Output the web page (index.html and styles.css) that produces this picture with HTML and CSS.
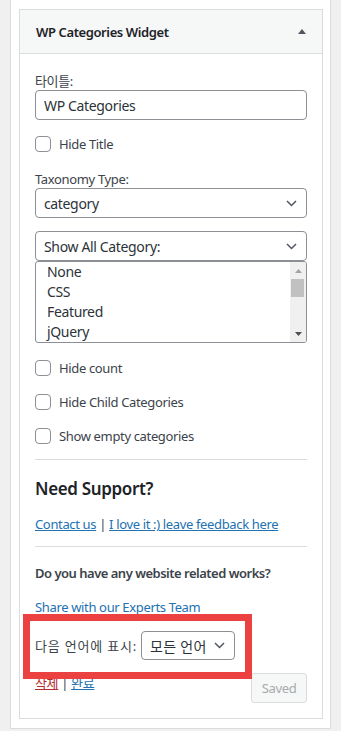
FILE: index.html
```html
<!DOCTYPE html>
<html>
<head>
  <meta charset="utf-8">
  <title>WP Categories Widget</title>
  <link rel="stylesheet" href="styles.css">
</head>
<body>
  <div class="sidebar">
    <div class="widget">
      <div class="widget-top">
        <h3 class="widget-title">WP Categories Widget</h3>
        <svg class="toggle" width="8" height="5" viewBox="0 0 8 5"><polygon points="0,5 4,0 8,5" fill="#50575e"/></svg>
      </div>
      <div class="widget-inside">
        <label class="field-label">타이틀:</label>
        <input class="text-input" type="text" value="WP Categories">

        <div class="check-row first-check">
          <span class="checkbox"></span>
          <span>Hide Title</span>
        </div>

        <label class="field-label taxonomy-label">Taxonomy Type:</label>
        <div class="select">
          <span>category</span>
          <svg class="chevron" width="11" height="7" viewBox="0 0 11 7"><polyline points="1,1 5.5,5.5 10,1" fill="none" stroke="#50575e" stroke-width="1.5"/></svg>
        </div>

        <div class="select show-all">
          <span>Show All Category:</span>
          <svg class="chevron" width="11" height="7" viewBox="0 0 11 7"><polyline points="1,1 5.5,5.5 10,1" fill="none" stroke="#50575e" stroke-width="1.5"/></svg>
        </div>
        <div class="listbox">
          <div class="options">
            <div class="option">None</div>
            <div class="option">CSS</div>
            <div class="option">Featured</div>
            <div class="option">jQuery</div>
          </div>
          <div class="scrollbar">
            <div class="scroll-btn">
              <svg width="7" height="4" viewBox="0 0 7 4"><polygon points="0,4 3.5,0 7,4" fill="#a3a3a3"/></svg>
            </div>
            <div class="scroll-thumb"></div>
            <div class="scroll-space"></div>
            <div class="scroll-btn">
              <svg width="7" height="4" viewBox="0 0 7 4"><polygon points="0,0 3.5,4 7,0" fill="#505050"/></svg>
            </div>
          </div>
        </div>

        <div class="check-row after-list">
          <span class="checkbox"></span>
          <span>Hide count</span>
        </div>
        <div class="check-row">
          <span class="checkbox"></span>
          <span>Hide Child Categories</span>
        </div>
        <div class="check-row">
          <span class="checkbox"></span>
          <span>Show empty categories</span>
        </div>

        <hr class="divider">

        <h3 class="support-title">Need Support?</h3>
        <p class="support-links">
          <a href="#">Contact us</a> | <a href="#">I love it :) leave feedback here</a>
        </p>

        <hr class="divider">

        <p class="works-title">Do you have any website related works?</p>
        <p class="works-link"><a href="#">Share with our Experts Team</a></p>

        <div class="lang-row">
          <span class="lang-label">다음 언어에 표시:</span>
          <div class="select lang-select">
            <span>모든 언어</span>
            <svg class="chevron" width="11" height="7" viewBox="0 0 11 7"><polyline points="1,1 5.5,5.5 10,1" fill="none" stroke="#50575e" stroke-width="1.5"/></svg>
          </div>
          <div class="highlight"></div>
        </div>

        <div class="widget-actions">
          <div class="action-links">
            <a href="#" class="delete-link">삭제</a> | <a href="#">완료</a>
          </div>
          <button class="saved-btn" disabled>Saved</button>
        </div>
      </div>
    </div>
  </div>
</body>
</html>
```

FILE: styles.css
```css
body {
  margin: 0;
  background: #f0f0f1;
  font-family: "Noto Sans", "Noto Sans CJK KR", sans-serif;
  font-size: 13px;
  letter-spacing: -0.35px;
  color: #3c434a;
}

.sidebar {
  margin-left: 10px;
  width: 321px;
  box-sizing: border-box;
  background: #fff;
  border: 1px solid #dcdcde;
  border-top: none;
  padding: 9px 7px 9px 8px;
}

.widget {
  border: 1px solid #dcdcde;
  background: #fff;
}

.widget-top {
  height: 43px;
  display: flex;
  align-items: center;
  justify-content: space-between;
  padding: 0 16px;
  background: #f6f7f7;
  border-bottom: 1px solid #dcdcde;
}

.widget-title {
  margin: 0;
  font-size: 13px;
  font-weight: 600;
  letter-spacing: -0.4px;
  color: #1d2327;
}

.widget-inside {
  padding: 18px 15px 15px;
}

.field-label {
  display: block;
  line-height: 18px;
}

.text-input {
  display: block;
  width: 100%;
  height: 30px;
  box-sizing: border-box;
  margin: 0;
  padding: 0 8px;
  border: 1px solid #8c8f94;
  border-radius: 4px;
  font-family: inherit;
  font-size: 14px;
  letter-spacing: -0.35px;
  color: #2c3338;
}

.check-row {
  display: flex;
  align-items: center;
  gap: 8px;
  height: 20px;
  margin-top: 14px;
}

.first-check {
  margin-top: 14px;
}

.after-list {
  margin-top: 15px;
}

.checkbox {
  width: 16px;
  height: 16px;
  box-sizing: border-box;
  border: 1px solid #8c8f94;
  border-radius: 4px;
  background: #fff;
}

.taxonomy-label {
  margin-top: 16px;
}

.select {
  display: flex;
  align-items: center;
  justify-content: space-between;
  height: 30px;
  box-sizing: border-box;
  padding: 0 9px 0 8px;
  border: 1px solid #8c8f94;
  border-radius: 4px;
  font-size: 14px;
  color: #2c3338;
}

.show-all {
  margin-top: 13px;
}

.listbox {
  display: flex;
  height: 82px;
  box-sizing: border-box;
  border: 1px solid #8c8f94;
  border-radius: 3px;
  overflow: hidden;
}

.options {
  flex: 1;
  padding-left: 11px;
  font-size: 14px;
  color: #2c3338;
}

.option {
  height: 20px;
  line-height: 20px;
}

.scrollbar {
  width: 16px;
  display: flex;
  flex-direction: column;
  background: #f0f0f0;
}

.scroll-btn {
  height: 17px;
  display: flex;
  align-items: center;
  justify-content: center;
}

.scroll-thumb {
  height: 18px;
  margin: 0 2px 0 1px;
  background: #c1c1c1;
}

.scroll-space {
  flex: 1;
}

.divider {
  margin: 13px 0 0;
  border: 0;
  border-top: 1px solid #dcdcde;
}

.support-title {
  margin: 17px 0 0;
  font-size: 17px;
  line-height: 24px;
  font-weight: 600;
  color: #1d2327;
}

.support-links {
  margin: 14px 0 13px;
  line-height: 18px;
}

a {
  color: #2271b1;
}

.works-title {
  margin: 17px 0 0;
  line-height: 18px;
  font-weight: 600;
  letter-spacing: -0.5px;
}

.works-link {
  margin: 16px 0 0;
  line-height: 18px;
}

.works-link a {
  text-decoration: none;
}

.lang-row {
  position: relative;
  display: flex;
  align-items: center;
  gap: 4px;
  margin-top: 15px;
  height: 29px;
}

.lang-label {
  letter-spacing: 0.8px;
}

.lang-select {
  width: 94px;
  height: 29px;
  letter-spacing: 0.3px;
}

.highlight {
  position: absolute;
  top: -17px;
  left: -12px;
  width: 229px;
  height: 65px;
  box-sizing: border-box;
  border: 7px solid #ec4141;
}

.widget-actions {
  display: flex;
  justify-content: space-between;
  align-items: flex-start;
  margin-top: 13px;
}

.action-links {
  line-height: 20px;
}

.delete-link {
  color: #b32d2e;
}

.saved-btn {
  width: 56px;
  height: 30px;
  padding: 0;
  border: 1px solid #dcdcde;
  border-radius: 3px;
  background: #f6f7f7;
  color: #a7aaad;
  font-family: inherit;
  font-size: 13px;
  letter-spacing: -0.35px;
}
```
